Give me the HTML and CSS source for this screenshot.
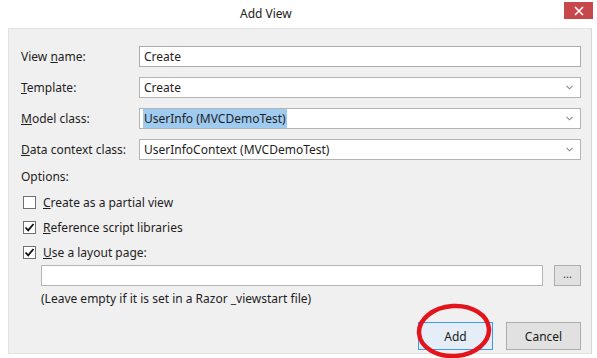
FILE: index.html
```html
<!DOCTYPE html>
<html lang="en">
<head>
  <meta charset="UTF-8" />
  <title>Add View</title>
  <link rel="stylesheet" href="styles.css">
</head>
<body>
  <div class="window">
    <header class="titlebar">
      <span class="title">Add View</span>
      <button class="close-btn" aria-label="Close">
        <svg width="10" height="10" viewBox="0 0 10 10"><path d="M1 1L9 9M9 1L1 9" stroke="#fff" stroke-width="1.6"/></svg>
      </button>
    </header>

    <main class="panel">
      <div class="form-grid">
        <label class="field-label">View <u>n</u>ame:</label>
        <div class="textbox">Create</div>

        <label class="field-label"><u>T</u>emplate:</label>
        <div class="combo">
          <span>Create</span>
          <svg class="chevron" width="7" height="5" viewBox="0 0 7 5"><path d="M0.5 0.8L3.5 3.8L6.5 0.8" fill="none" stroke="#8a8a8a" stroke-width="1.1"/></svg>
        </div>

        <label class="field-label"><u>M</u>odel class:</label>
        <div class="combo">
          <span class="selected">UserInfo (MVCDemoTest)</span>
          <svg class="chevron" width="7" height="5" viewBox="0 0 7 5"><path d="M0.5 0.8L3.5 3.8L6.5 0.8" fill="none" stroke="#8a8a8a" stroke-width="1.1"/></svg>
        </div>

        <label class="field-label"><u>D</u>ata context class:</label>
        <div class="combo">
          <span>UserInfoContext (MVCDemoTest)</span>
          <svg class="chevron" width="7" height="5" viewBox="0 0 7 5"><path d="M0.5 0.8L3.5 3.8L6.5 0.8" fill="none" stroke="#8a8a8a" stroke-width="1.1"/></svg>
        </div>
      </div>

      <div class="options">
        <div class="options-title">Options:</div>
        <div class="check-row">
          <span class="checkbox"></span>
          <span><u>C</u>reate as a partial view</span>
        </div>
        <div class="check-row">
          <span class="checkbox">
            <svg width="11" height="11" viewBox="0 0 11 11"><path d="M1.5 5.5L4.2 8.3L9.5 2" fill="none" stroke="#111" stroke-width="1.8"/></svg>
          </span>
          <span><u>R</u>eference script libraries</span>
        </div>
        <div class="check-row">
          <span class="checkbox">
            <svg width="11" height="11" viewBox="0 0 11 11"><path d="M1.5 5.5L4.2 8.3L9.5 2" fill="none" stroke="#111" stroke-width="1.8"/></svg>
          </span>
          <span><u>U</u>se a layout page:</span>
        </div>

        <div class="layout-row">
          <div class="textbox layout-input"></div>
          <button class="browse-btn">...</button>
        </div>
        <div class="hint">(Leave empty if it is set in a Razor _viewstart file)</div>
      </div>

      <div class="actions">
        <div class="add-wrap">
          <button class="btn btn-default">Add</button>
          <svg class="circle-mark" width="80" height="58" viewBox="0 0 80 58">
            <ellipse cx="39" cy="28" rx="35" ry="25" fill="none" stroke="#e3141b" stroke-width="4.5" transform="rotate(-4 39 28)"/>
          </svg>
        </div>
        <button class="btn">Cancel</button>
      </div>
    </main>
  </div>
</body>
</html>
```

FILE: styles.css
```css
body {
  margin: 0;
  background-color: #ffffff;
  font-family: 'Noto Sans', 'Open Sans', sans-serif;
  font-size: 12px;
  color: #1e1e1e;
}

.window {
  width: 597px;
  height: 358px;
  display: flex;
  flex-direction: column;
}

.titlebar {
  height: 28px;
  display: flex;
  align-items: flex-start;
  justify-content: space-between;
}

.title {
  margin: 5px 0 0 240px;
  font-size: 12px;
  color: #222;
}

.close-btn {
  width: 29px;
  height: 17px;
  margin: 2px 4px 0 0;
  padding: 0;
  border: none;
  background-color: #c7484a;
  display: flex;
  align-items: center;
  justify-content: center;
}

.panel {
  margin: 0 5px 4px 8px;
  flex: 1;
  background-color: #f0f0f0;
  border: 1px solid #e2e2e2;
  border-right-color: #d6d6d6;
  padding: 17px 10px 0 12px;
  display: flex;
  flex-direction: column;
}

.form-grid {
  display: grid;
  grid-template-columns: 118px 1fr;
  row-gap: 10px;
  align-items: center;
}

.field-label {
  line-height: 21px;
}

.textbox,
.combo {
  height: 19px;
  background-color: #fff;
  border: 1px solid #acacac;
  padding: 0 4px;
  line-height: 19px;
}

.combo {
  display: flex;
  align-items: center;
  justify-content: space-between;
  border-color: #b4b4b4;
}

.chevron {
  margin-right: 3px;
}

.selected {
  background-color: #9fcbf0;
  padding: 0 1px;
  margin-left: -1px;
}

.options {
  margin-top: 9px;
}

.options-title {
  line-height: 16px;
}

.check-row {
  display: flex;
  align-items: center;
  gap: 7px;
  height: 16px;
  margin-top: 9px;
  padding-left: 2px;
}

.checkbox {
  width: 11px;
  height: 11px;
  border: 1px solid #707070;
  background-color: #fff;
  display: flex;
  align-items: center;
  justify-content: center;
}

.layout-row {
  display: flex;
  align-items: center;
  gap: 11px;
  margin-top: 5px;
  padding-left: 20px;
}

.layout-input {
  flex: 1;
  height: 19px;
  border-color: #b5b5b5;
}

.browse-btn {
  width: 27px;
  height: 21px;
  padding: 0 0 4px;
  border: 1px solid #adadad;
  background-color: #e1e1e1;
  font-family: inherit;
  font-size: 11px;
  color: #333;
}

.hint {
  margin-top: 5px;
  padding-left: 20px;
  line-height: 16px;
}

.actions {
  margin-top: auto;
  margin-bottom: 3px;
  display: flex;
  justify-content: flex-end;
  gap: 13px;
}

.add-wrap {
  position: relative;
}

.btn {
  width: 75px;
  height: 28px;
  border: 1px solid #adadad;
  background-color: #e1e1e1;
  font-family: inherit;
  font-size: 12px;
  color: #1a1a1a;
}

.btn-default {
  border-color: #3c9bf0;
  background-color: #e5eef7;
}

.circle-mark {
  position: absolute;
  left: -3px;
  top: -19px;
}
```
